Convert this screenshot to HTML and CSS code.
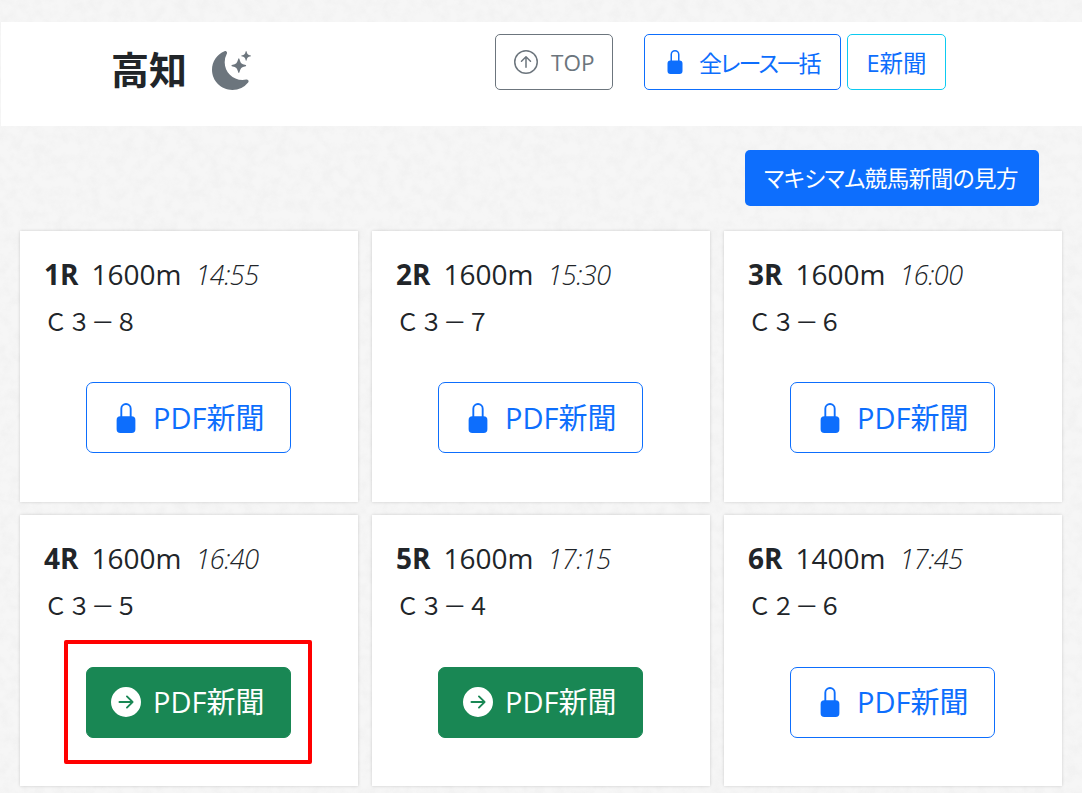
FILE: index.html
```html
<!DOCTYPE html>
<html lang="ja">
<head>
<meta charset="utf-8">
<title>高知</title>
<link rel="stylesheet" href="styles.css">
</head>
<body>
<svg class="defs" aria-hidden="true">
  <symbol id="lock" viewBox="0 0 16 16"><path d="M8 1a2 2 0 0 1 2 2v4H6V3a2 2 0 0 1 2-2zm3 6V3a3 3 0 0 0-6 0v4a2 2 0 0 0-2 2v5a2 2 0 0 0 2 2h6a2 2 0 0 0 2-2V9a2 2 0 0 0-2-2z"/></symbol>
  <symbol id="go" viewBox="0 0 16 16"><path d="M8 0a8 8 0 1 1 0 16A8 8 0 0 1 8 0zM4.5 7.5a.5.5 0 0 0 0 1h5.793l-2.147 2.146a.5.5 0 0 0 .708.708l3-3a.5.5 0 0 0 0-.708l-3-3a.5.5 0 1 0-.708.708L10.293 7.5H4.5z"/></symbol>
</svg>
<header class="head">
  <div class="place">
    <h1 class="place-name">高知</h1>
    <svg class="moon" viewBox="0 0 16 16"><path d="M6 .278a.768.768 0 0 1 .08.858 7.208 7.208 0 0 0-.878 3.46c0 4.021 3.278 7.277 7.318 7.277.527 0 1.04-.055 1.533-.16a.787.787 0 0 1 .81.316.733.733 0 0 1-.031.893A8.349 8.349 0 0 1 8.344 16C3.734 16 0 12.286 0 7.71 0 4.266 2.114 1.312 5.124.06A.752.752 0 0 1 6 .278z"/><path d="M10.794 3.148a.217.217 0 0 1 .412 0l.387 1.162c.173.518.579.924 1.097 1.097l1.162.387a.217.217 0 0 1 0 .412l-1.162.387a1.734 1.734 0 0 0-1.097 1.097l-.387 1.162a.217.217 0 0 1-.412 0l-.387-1.162A1.734 1.734 0 0 0 9.31 6.593l-1.162-.387a.217.217 0 0 1 0-.412l1.162-.387a1.734 1.734 0 0 0 1.097-1.097l.387-1.162zM13.863.099a.145.145 0 0 1 .274 0l.258.774c.115.346.386.617.732.732l.774.258a.145.145 0 0 1 0 .274l-.774.258a1.156 1.156 0 0 0-.732.732l-.258.774a.145.145 0 0 1-.274 0l-.258-.774a1.156 1.156 0 0 0-.732-.732l-.774-.258a.145.145 0 0 1 0-.274l.774-.258c.346-.115.617-.386.732-.732L13.863.1z"/></svg>
  </div>
  <a class="btn btn-top"><svg class="ico-top" viewBox="0 0 16 16"><path fill-rule="evenodd" d="M1 8a7 7 0 1 0 14 0A7 7 0 0 0 1 8zm15 0A8 8 0 1 1 0 8a8 8 0 0 1 16 0zm-7.5 3.5a.5.5 0 0 1-1 0V5.707L5.354 7.854a.5.5 0 1 1-.708-.708l3-3a.5.5 0 0 1 .708 0l3 3a.5.5 0 0 1-.708.708L8.5 5.707V11.5z"/></svg>TOP</a>
  <a class="btn btn-all"><svg class="ico-lock"><use href="#lock"/></svg>全レース一括</a>
  <a class="btn btn-e">E新聞</a>
</header>
<div class="howto-row"><a class="howto">マキシマム競馬新聞の見方</a></div>
<main class="races">
  <article class="race">
    <div class="race-title"><b class="no">1R</b><span>1600m</span><i class="time">14:55</i></div>
    <p class="grade">Ｃ３－８</p>
    <a class="pdf"><svg class="ico-pdf"><use href="#lock"/></svg>PDF新聞</a>
  </article>
  <article class="race">
    <div class="race-title"><b class="no">2R</b><span>1600m</span><i class="time">15:30</i></div>
    <p class="grade">Ｃ３－７</p>
    <a class="pdf"><svg class="ico-pdf"><use href="#lock"/></svg>PDF新聞</a>
  </article>
  <article class="race">
    <div class="race-title"><b class="no">3R</b><span>1600m</span><i class="time">16:00</i></div>
    <p class="grade">Ｃ３－６</p>
    <a class="pdf"><svg class="ico-pdf"><use href="#lock"/></svg>PDF新聞</a>
  </article>
  <article class="race">
    <div class="race-title"><b class="no">4R</b><span>1600m</span><i class="time">16:40</i></div>
    <p class="grade">Ｃ３－５</p>
    <a class="pdf pdf-open pdf-marked"><svg class="ico-pdf"><use href="#go"/></svg>PDF新聞</a>
  </article>
  <article class="race">
    <div class="race-title"><b class="no">5R</b><span>1600m</span><i class="time">17:15</i></div>
    <p class="grade">Ｃ３－４</p>
    <a class="pdf pdf-open"><svg class="ico-pdf"><use href="#go"/></svg>PDF新聞</a>
  </article>
  <article class="race">
    <div class="race-title"><b class="no">6R</b><span>1400m</span><i class="time">17:45</i></div>
    <p class="grade">Ｃ２－６</p>
    <a class="pdf"><svg class="ico-pdf"><use href="#lock"/></svg>PDF新聞</a>
  </article>
</main>
</body>
</html>
```
FILE: styles.css
```css
* { box-sizing: border-box; }
html, body { height: 793px; overflow: hidden; }
body {
  margin: 0;
  padding-top: 22px;
  color: #212529;
  font-family: "Open Sans", "Noto Sans CJK JP", sans-serif;
  font-feature-settings: "palt";
  background-color: #f6f6f6;
  background-image: url("data:image/svg+xml,%3Csvg xmlns='http://www.w3.org/2000/svg' width='500' height='500'%3E%3Cfilter id='n'%3E%3CfeTurbulence type='fractalNoise' baseFrequency='.09' numOctaves='4' seed='7' stitchTiles='stitch'/%3E%3CfeColorMatrix values='0 0 0 0 .45 0 0 0 0 .45 0 0 0 0 .45 .6 0 0 0 -.22'/%3E%3C/filter%3E%3Crect width='500' height='500' filter='url(%23n)' opacity='.22'/%3E%3C/svg%3E");
}
.defs { display: none; }
a { text-decoration: none; }

.head {
  display: flex;
  align-items: flex-start;
  height: 104px;
  margin-left: 1px;
  padding: 12px 0 0 110px;
  background: #fff;
}
.place {
  display: flex;
  align-items: center;
  gap: 25px;
  width: 384px;
  margin-top: 13px;
}
.place-name { margin: 0; padding-bottom: 2px; font-size: 38px; line-height: 44px; font-weight: 700; }
.moon { width: 39px; height: 39px; fill: #6c757d; }

.btn {
  display: flex;
  align-items: center;
  height: 56px;
  border: 1px solid;
  border-radius: 5px;
  font-size: 23px;
  background: #fff;
}
.btn-top { width: 118px; padding-left: 18px; border-color: #6c757d; color: #6c757d; font-size: 22.5px; }
.ico-top { width: 24px; height: 24px; margin-right: 13px; fill: #6c757d; }
.btn-all { width: 197px; margin-left: 31px; padding-left: 18px; border-color: #0d6efd; color: #0d6efd; letter-spacing: -1.8px; }
.ico-lock { width: 24px; height: 24px; margin-right: 12px; fill: #0d6efd; }
.btn-e { width: 99px; margin-left: 6px; justify-content: center; border-color: #0dcaf0; color: #0d6efd; font-size: 23.5px; }

.howto-row { display: flex; justify-content: flex-end; margin-top: 24px; padding-right: 43px; }
.howto {
  display: flex;
  align-items: center;
  justify-content: center;
  width: 294px;
  height: 56px;
  padding: 0 2px 2px 0;
  border-radius: 5px;
  font-size: 22.5px;
  letter-spacing: -.5px;
  color: #fff;
  background: #0d6efd;
}

.races {
  display: grid;
  grid-template-columns: repeat(3, 338px);
  grid-auto-rows: 271px;
  column-gap: 14px;
  row-gap: 13.5px;
  margin-top: 24.75px;
  padding: 0 20px;
}
.race {
  display: flex;
  flex-direction: column;
  padding: 24px 24px 48.55px;
  background: #fff;
  box-shadow: 0 0 3px rgba(0, 0, 0, .17);
}
.race-title { display: flex; align-items: baseline; gap: 13px; font-size: 28px; line-height: 38px; }
.no { font-weight: 700; }
.time { margin-left: 1px; font-size: 27px; letter-spacing: -.5px; font-weight: 300; font-style: italic; }
.grade { margin: 10px 0 0; font-size: 23.5px; line-height: 36px; font-feature-settings: normal; }
.pdf {
  position: relative;
  display: flex;
  align-items: center;
  align-self: center;
  width: 205px;
  height: 71px;
  margin-top: auto;
  margin-right: 1px;
  padding: 0 0 4px 24px;
  border: 1px solid #0d6efd;
  border-radius: 7px;
  font-size: 29px;
  color: #0d6efd;
}
.ico-pdf { width: 30px; height: 30px; margin: 4px 12px 0 0; fill: #0d6efd; }
.pdf-open { border-color: #198754; color: #fff; background: #198754; }
.pdf-open .ico-pdf { fill: #fff; }
.pdf-marked::after {
  content: "";
  position: absolute;
  inset: -28px -22px -27px -23px;
  border: 4px solid #f00;
  border-radius: 2px;
}
```
